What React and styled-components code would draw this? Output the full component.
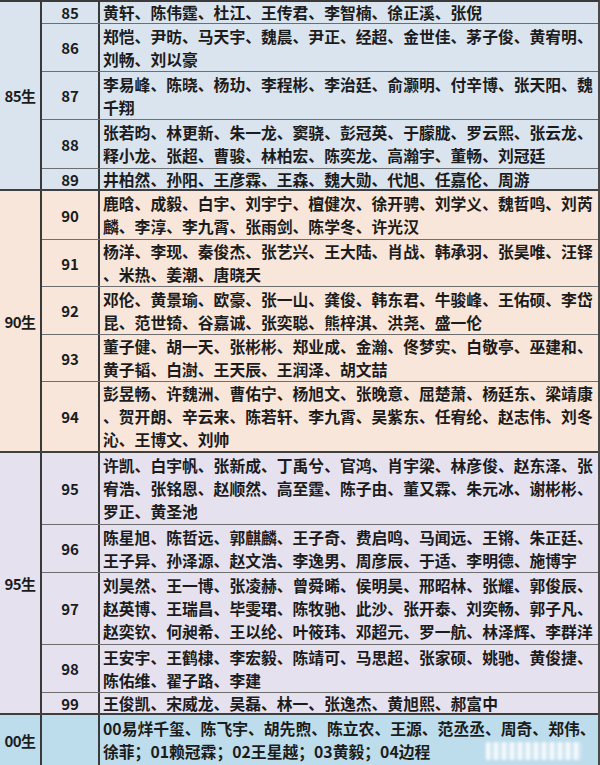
import React from "react"
import styled, { createGlobalStyle } from "styled-components"

const GlobalStyle = createGlobalStyle`
  html, body {
    margin: 0;
    padding: 0;
    background: #ffffff;
  }
`

const groups = [
  {
    label: "85生",
    bg: "#dae4ef",
    rows: [
      { year: "85", h: 22, lines: ["黄轩、陈伟霆、杜江、王传君、李智楠、徐正溪、张倪"] },
      { year: "86", h: 48, lines: ["郑恺、尹昉、马天宇、魏晨、尹正、经超、金世佳、茅子俊、黄宥明、", "刘畅、刘以豪"] },
      { year: "87", h: 48, lines: ["李易峰、陈晓、杨玏、李程彬、李治廷、俞灏明、付辛博、张天阳、魏", "千翔"] },
      { year: "88", h: 49, lines: ["张若昀、林更新、朱一龙、窦骁、彭冠英、于朦胧、罗云熙、张云龙、", "释小龙、张超、曹骏、林柏宏、陈奕龙、高瀚宇、董畅、刘冠廷"] },
      { year: "89", h: 20, lines: ["井柏然、孙阳、王彦霖、王森、魏大勋、代旭、任嘉伦、周游"] },
    ],
  },
  {
    label: "90生",
    bg: "#f9e6da",
    rows: [
      { year: "90", h: 49, lines: ["鹿晗、成毅、白宇、刘宇宁、檀健次、徐开骋、刘学义、魏哲鸣、刘芮", "麟、李淳、李九霄、张雨剑、陈学冬、许光汉"] },
      { year: "91", h: 47, lines: ["杨洋、李现、秦俊杰、张艺兴、王大陆、肖战、韩承羽、张昊唯、汪铎", "、米热、姜潮、唐晓天"] },
      { year: "92", h: 48, lines: ["邓伦、黄景瑜、欧豪、张一山、龚俊、韩东君、牛骏峰、王佑硕、李岱", "昆、范世锜、谷嘉诚、张奕聪、熊梓淇、洪尧、盛一伦"] },
      { year: "93", h: 47, lines: ["董子健、胡一天、张彬彬、郑业成、金瀚、佟梦实、白敬亭、巫建和、", "黄子韬、白澍、王天辰、王润泽、胡文喆"] },
      { year: "94", h: 69, lines: ["彭昱畅、许魏洲、曹佑宁、杨旭文、张晚意、屈楚萧、杨廷东、梁靖康", "、贺开朗、辛云来、陈若轩、李九霄、吴紫东、任宥纶、赵志伟、刘冬", "沁、王博文、刘帅"] },
    ],
  },
  {
    label: "95生",
    bg: "#e5e1ef",
    rows: [
      { year: "95", h: 72, lines: ["许凯、白宇帆、张新成、丁禹兮、官鸿、肖宇梁、林彦俊、赵东泽、张", "宥浩、张铭恩、赵顺然、高至霆、陈子由、董又霖、朱元冰、谢彬彬、", "罗正、黄圣池"] },
      { year: "96", h: 48, lines: ["陈星旭、陈哲远、郭麒麟、王子奇、费启鸣、马闻远、王锵、朱正廷、", "王子异、孙泽源、赵文浩、李逸男、周彦辰、于适、李明德、施博宇"] },
      { year: "97", h: 72, lines: ["刘昊然、王一博、张凌赫、曾舜晞、侯明昊、邢昭林、张耀、郭俊辰、", "赵英博、王瑞昌、毕雯珺、陈牧驰、此沙、张开泰、刘奕畅、郭子凡、", "赵奕钦、何昶希、王以纶、叶筱玮、邓超元、罗一航、林泽辉、李群洋"] },
      { year: "98", h: 48, lines: ["王安宇、王鹤棣、李宏毅、陈靖可、马思超、张家硕、姚驰、黄俊捷、", "陈佑维、翟子路、李建"] },
      { year: "99", h: 20, lines: ["王俊凯、宋威龙、吴磊、林一、张逸杰、黄旭熙、郝富中"] },
    ],
  },
  {
    label: "00生",
    bg: "#bddcec",
    watermark: true,
    rows: [
      { year: "", h: 50, lines: ["00易烊千玺、陈飞宇、胡先煦、陈立农、王源、范丞丞、周奇、郑伟、", "徐菲；01赖冠霖；02王星越；03黄毅；04边程"] },
    ],
  },
]

const Table = styled.div`
  width: 600px;
  height: 765px;
  box-sizing: border-box;
  border-top: 2px solid #3b3b3b;
  border-right: 2px solid #4a4a4a;
  overflow: hidden;
  font-family: "Noto Sans CJK SC", "Noto Sans", sans-serif;
  color: #1c1c1c;
`

const Group = styled.section`
  position: relative;
  display: flex;
  background: ${(p) => p.$bg};
  border-bottom: ${(p) => (p.$last ? "none" : "2px solid #3f3f3f")};
`

const GroupLabel = styled.div`
  width: 40px;
  flex-shrink: 0;
  display: flex;
  align-items: center;
  justify-content: center;
  border-right: 2px solid #3a3a3a;
  font-size: 15px;
  font-weight: 700;
  letter-spacing: -0.5px;
`

const Rows = styled.div`
  flex: 1;
  display: flex;
  flex-direction: column;
`

const Row = styled.div`
  display: flex;
  height: ${(p) => p.$h}px;
  box-sizing: border-box;
  border-bottom: 1px solid #6e6e6e;

  &:last-child {
    border-bottom: none;
  }
`

const Year = styled.div`
  width: 56px;
  flex-shrink: 0;
  display: flex;
  align-items: center;
  justify-content: center;
  border-right: 2px solid #3a3a3a;
  font-size: 15px;
  font-weight: 700;
`

const Names = styled.div`
  flex: 1;
  min-width: 0;
  display: flex;
  flex-direction: column;
  justify-content: center;
  padding-left: 3px;
  font-size: 15.8px;
  font-weight: 700;
  line-height: 23px;
  white-space: nowrap;
`

const Line = styled.span`
  display: block;
`

/* blurred stamp in the corner of the last row, a picture rather than text */
const Watermark = styled.div`
  position: absolute;
  right: 16px;
  bottom: 5px;
  width: 96px;
  height: 18px;
  background: repeating-linear-gradient(
    90deg,
    rgba(255, 255, 255, 0.9) 0 4px,
    rgba(255, 255, 255, 0.25) 4px 8px
  );
  filter: blur(1.5px);
  pointer-events: none;
`

const App = () => {
  return (
    <>
      <GlobalStyle />
      <Table>
        {groups.map((g, gi) => (
          <Group key={g.label} $bg={g.bg} $last={gi === groups.length - 1}>
            <GroupLabel>{g.label}</GroupLabel>
            <Rows>
              {g.rows.map((r, ri) => (
                <Row key={ri} $h={r.h}>
                  <Year>{r.year}</Year>
                  <Names>
                    {r.lines.map((l, li) => (
                      <Line key={li}>{l}</Line>
                    ))}
                  </Names>
                </Row>
              ))}
            </Rows>
            {g.watermark && <Watermark />}
          </Group>
        ))}
      </Table>
    </>
  )
}

export default App
